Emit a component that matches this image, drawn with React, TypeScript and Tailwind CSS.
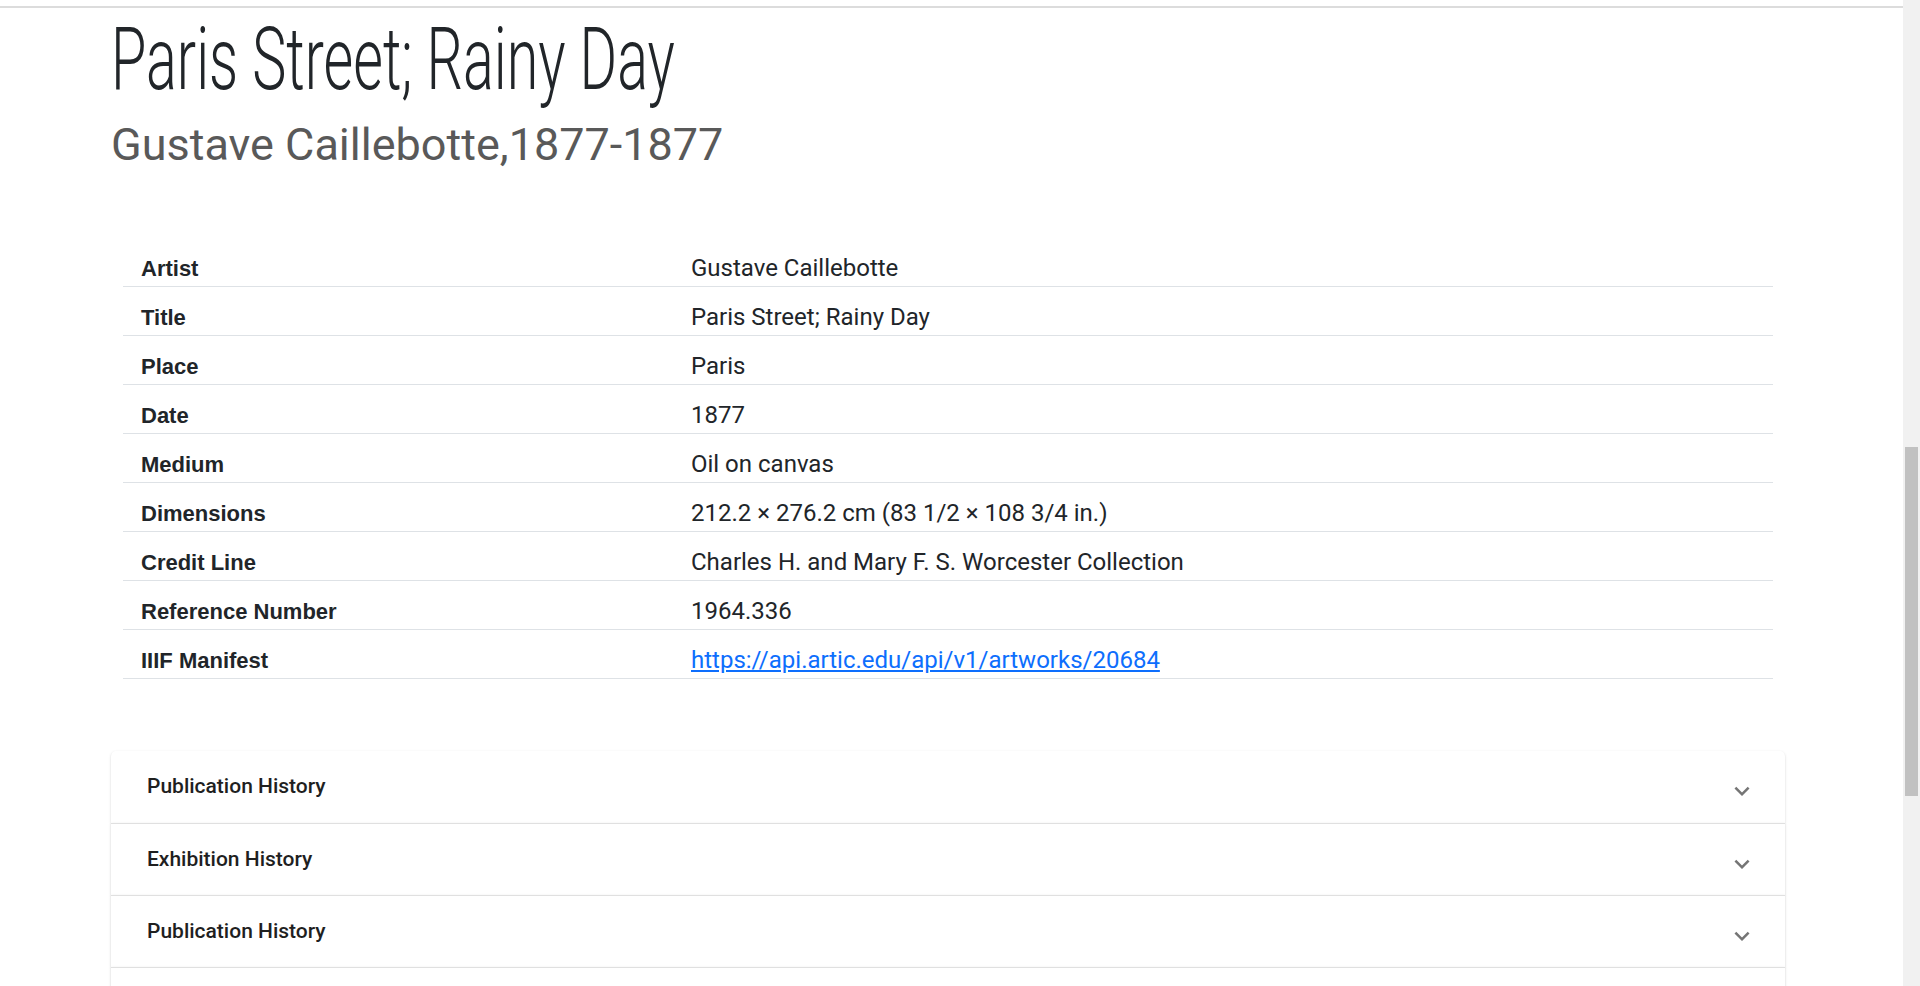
import React from 'react';

type Row = { label: string; value: string; href?: string };

const rows: Row[] = [
  { label: 'Artist', value: 'Gustave Caillebotte' },
  { label: 'Title', value: 'Paris Street; Rainy Day' },
  { label: 'Place', value: 'Paris' },
  { label: 'Date', value: '1877' },
  { label: 'Medium', value: 'Oil on canvas' },
  { label: 'Dimensions', value: '212.2 × 276.2 cm (83 1/2 × 108 3/4 in.)' },
  { label: 'Credit Line', value: 'Charles H. and Mary F. S. Worcester Collection' },
  { label: 'Reference Number', value: '1964.336' },
  {
    label: 'IIIF Manifest',
    value: 'https://api.artic.edu/api/v1/artworks/20684',
    href: 'https://api.artic.edu/api/v1/artworks/20684',
  },
];

// last panel is only peeking in at the bottom of the viewport
const sections = ['Publication History', 'Exhibition History', 'Publication History', ''];

function ExpandIcon() {
  return (
    <svg viewBox="0 0 24 24" className="mt-[8px] h-[30px] w-[30px] fill-[#757575]" aria-hidden="true">
      <path d="M16.59 8.59 12 13.17 7.41 8.59 6 10l6 6 6-6z" />
    </svg>
  );
}

function DetailRow({ row }: { row: Row }) {
  return (
    <div className="flex h-[49px] items-baseline border-b border-[#dee2e6] pt-[16px]">
      <div className="w-1/3 pl-[18px] font-['Liberation_Sans',Arial,sans-serif] text-[22px] leading-[28px] font-bold text-[#212529]">
        {row.label}
      </div>
      <div className="flex-1 pl-[18px] font-['Roboto',sans-serif] text-[24px] leading-[28px] text-[#212529]">
        {row.href ? (
          <a href={row.href} className="text-[#0d6efd] underline">
            {row.value}
          </a>
        ) : (
          row.value
        )}
      </div>
    </div>
  );
}

function AccordionItem({ title, first }: { title: string; first: boolean }) {
  return (
    <div
      className={
        first
          ? 'flex h-[72px] items-center justify-between rounded-t-[5px] bg-white pl-[36px] pr-[28px] shadow-[0_2px_1px_-1px_rgba(0,0,0,0.2),0_1px_1px_0_rgba(0,0,0,0.14),0_1px_3px_0_rgba(0,0,0,0.12)]'
          : 'flex h-[72px] items-center justify-between border-t border-[rgba(0,0,0,0.12)] bg-white pl-[36px] pr-[28px] shadow-[0_2px_1px_-1px_rgba(0,0,0,0.2),0_1px_1px_0_rgba(0,0,0,0.14),0_1px_3px_0_rgba(0,0,0,0.12)]'
      }
    >
      <span className="font-['Roboto',sans-serif] text-[21px] font-medium text-[#1f1f1f]">{title}</span>
      <ExpandIcon />
    </div>
  );
}

export default function App() {
  return (
    <div className="flex h-screen w-full overflow-hidden bg-white">
      <main className="flex-1 overflow-hidden">
        <div className="mt-[6px] h-[2px] bg-[#dcdcdc]" />

        <div className="pl-[111px] pr-[118px]">
          <h1 className="mt-[8px] origin-left scale-x-[0.66] font-['Roboto',sans-serif] text-[87px] leading-[87px] font-light whitespace-nowrap text-[#212529]">
            Paris Street; Rainy Day
          </h1>
          <h2 className="mt-[15px] font-['Roboto',sans-serif] text-[45px] leading-[54px] text-[#595959]">
            Gustave Caillebotte,1877-1877
          </h2>

          <section className="mx-[12px] mt-[66px]">
            {rows.map((row) => (
              <DetailRow key={row.label} row={row} />
            ))}
          </section>

          <section className="mt-[72px]">
            {sections.map((title, i) => (
              <AccordionItem key={i} title={title} first={i === 0} />
            ))}
          </section>
        </div>
      </main>

      <div className="flex w-[17px] flex-col bg-[#f1f1f1]">
        <div className="mx-[2px] mt-[447px] h-[349px] bg-[#c1c1c1]" />
      </div>
    </div>
  );
}
